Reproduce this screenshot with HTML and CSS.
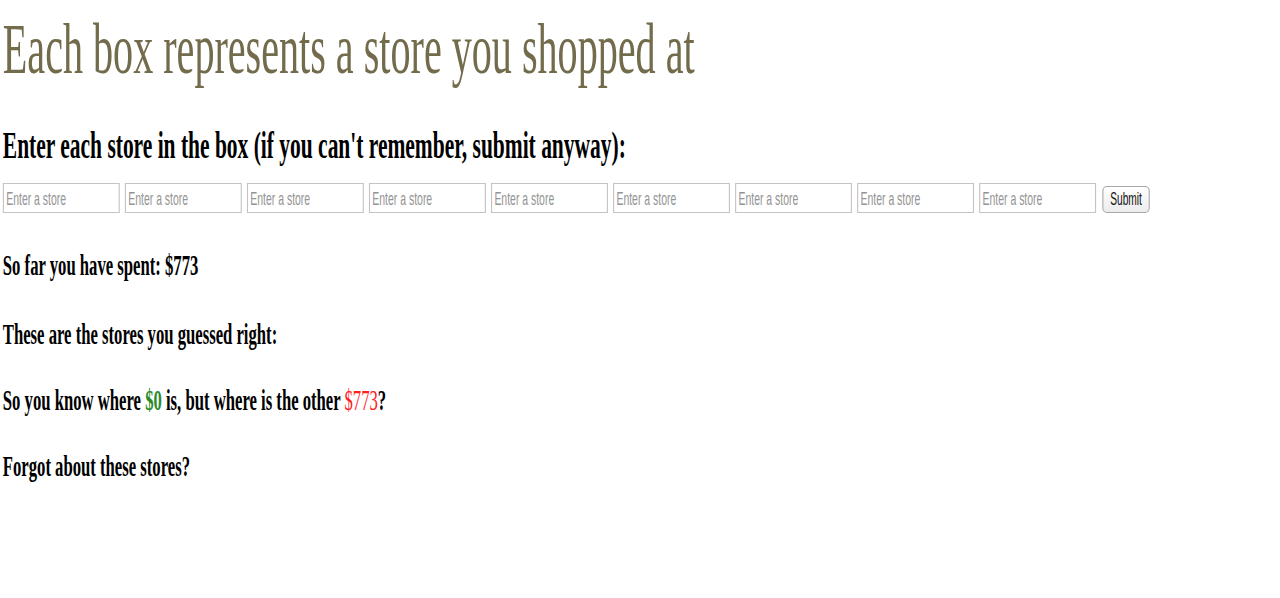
FILE: index.html
```html
<!DOCTYPE html>
<html lang="en">
<head>
<meta charset="utf-8">
<title>Stores</title>
<link rel="stylesheet" href="styles.css">
</head>
<body>
<div class="viewport">
  <div class="page">
    <h1 class="title">Each box represents a store you shopped at</h1>
    <h2 class="prompt">Enter each store in the box (if you can't remember, submit anyway):</h2>
    <form class="store-form">
      <input class="store-input" type="text" placeholder="Enter a store">
      <input class="store-input" type="text" placeholder="Enter a store">
      <input class="store-input" type="text" placeholder="Enter a store">
      <input class="store-input" type="text" placeholder="Enter a store">
      <input class="store-input" type="text" placeholder="Enter a store">
      <input class="store-input" type="text" placeholder="Enter a store">
      <input class="store-input" type="text" placeholder="Enter a store">
      <input class="store-input" type="text" placeholder="Enter a store">
      <input class="store-input" type="text" placeholder="Enter a store">
      <button class="submit-btn" type="button">Submit</button>
    </form>
    <h3 class="line line-first">So far you have spent: $773</h3>
    <h3 class="line line-wide">These are the stores you guessed right:</h3>
    <h3 class="line">So you know where <span class="known">$0</span> is, but where is the other <span class="unknown">$773</span>?</h3>
    <h3 class="line">Forgot about these stores?</h3>
  </div>
</div>
</body>
</html>
```
FILE: styles.css
```css
html, body {
  margin: 0;
  padding: 0;
  background: #ffffff;
  overflow: hidden;
}

.viewport {
  width: 1280px;
  height: 598px;
  overflow: hidden;
}

.page {
  width: 2260px;
  padding: 8px 0 0 5px;
  box-sizing: border-box;
  transform: scaleX(0.565);
  transform-origin: 0 0;
  font-family: "Liberation Serif", "Times New Roman", serif;
  color: #000;
}

.title {
  margin: 0;
  font-size: 71px;
  line-height: 82px;
  font-weight: normal;
  color: #726c4c;
}

.prompt {
  margin: 33px 0 16px;
  font-size: 38px;
  line-height: 44px;
  font-weight: bold;
}

.store-form {
  display: flex;
  align-items: flex-end;
  gap: 9px;
  margin: 0;
}

.store-input {
  width: 207px;
  height: 30px;
  box-sizing: border-box;
  margin: 0;
  padding: 2px 4px 0;
  border: 1px solid #c4c4c4;
  border-left-width: 2px;
  border-right-width: 2px;
  border-radius: 0;
  font-family: "Liberation Sans", Arial, sans-serif;
  font-size: 18.5px;
  color: #333;
  background: #fff;
}

.store-input::placeholder {
  color: #949494;
}

.submit-btn {
  height: 27px;
  margin: 0 0 0 2px;
  padding: 0 12px;
  border: 1px solid #a9a9a9;
  border-left-width: 2px;
  border-right-width: 2px;
  border-radius: 8px / 5px;
  background: linear-gradient(#ffffff, #ececec);
  font-family: "Liberation Sans", Arial, sans-serif;
  font-size: 18px;
  color: #111;
}

.line {
  margin: 31px 0 0;
  font-size: 29.5px;
  line-height: 35px;
  font-weight: bold;
}

.line-first {
  margin-top: 35px;
}

.line-wide {
  margin-top: 34px;
}

.known {
  color: #2a8a2a;
}

.unknown {
  color: #ff2020;
  font-weight: normal;
}
```
